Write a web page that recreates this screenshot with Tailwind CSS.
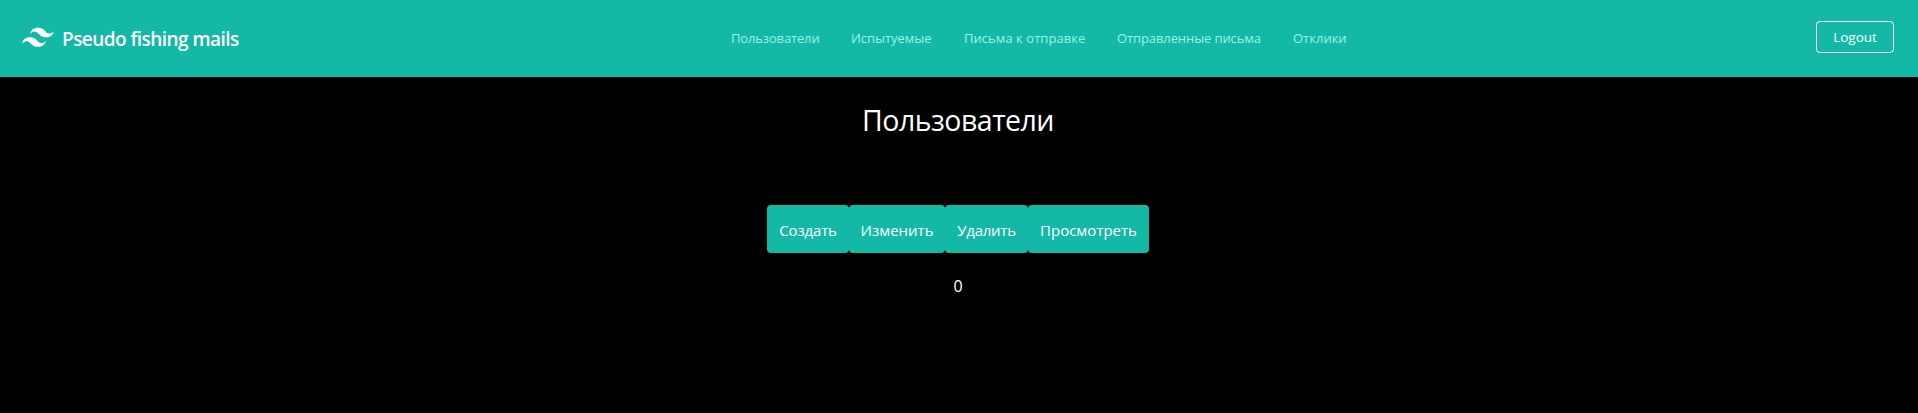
<!DOCTYPE html>
<html lang="ru"><head><meta charset="utf-8"><title>Pseudo fishing mails</title>
<script src="https://cdn.jsdelivr.net/npm/@tailwindcss/browser@4"></script></head>
<body class="bg-black text-white font-['Segoe_UI','Open_Sans',sans-serif] min-h-screen overflow-hidden">
<nav class="flex items-start bg-[#14b8a6] h-[77px] pl-[22px] pr-6 pt-[21px] whitespace-nowrap">
<div class="flex items-start w-[709px]">
<svg class="fill-current w-8 h-8 mr-2" viewBox="0 0 54 54"><path d="M13.5 22.1c1.8-7.2 6.3-10.8 13.5-10.8 10.8 0 12.15 8.1 17.55 9.45 3.6.9 6.75-.45 9.45-4.05-1.8 7.2-6.3 10.8-13.5 10.8-10.8 0-12.15-8.1-17.55-9.45-3.6-.9-6.75.45-9.45 4.05zM0 38.3c1.8-7.2 6.3-10.8 13.5-10.8 10.8 0 12.15 8.1 17.55 9.45 3.6.9 6.75-.45 9.45-4.05-1.8 7.2-6.3 10.8-13.5 10.8-10.8 0-12.15-8.1-17.55-9.45-3.6-.9-6.75.45-9.45 4.05z"/></svg>
<span class="font-semibold text-[19px] leading-7 tracking-[-0.55px] pt-1">Pseudo fishing mails</span></div>
<div class="flex gap-8 pt-[7px] text-[13px] leading-5 text-[#99f6e4] grow">
<a class="w-[88px] tracking-[-0.15px]">Пользователи</a>
<a class="w-[81px] tracking-[-0.05px]">Испытуемые</a>
<a class="w-[121px] tracking-[0.05px]">Письма к отправке</a>
<a class="w-[144px] tracking-[-0.1px]">Отправленные письма</a>
<a class="w-[54px]">Отклики</a></div>
<a class="flex items-center justify-center w-[78px] h-8 pt-px text-[13.5px] leading-none border border-white rounded">Logout</a>
</nav>
<main class="flex flex-col items-center pr-[2px]">
<h1 class="text-[28.5px] leading-9 tracking-[-0.5px] mt-[25px]">Пользователи</h1>
<div class="flex mt-[67px] h-12 text-[15px]">
<button class="w-[82px] pt-[2px] bg-[#14b8a6] rounded tracking-[-0.15px]">Создать</button>
<button class="w-24 pt-[2px] bg-[#14b8a6] rounded">Изменить</button>
<button class="w-[83px] pt-[2px] bg-[#14b8a6] rounded tracking-[-0.25px]">Удалить</button>
<button class="w-[121px] pt-[2px] bg-[#14b8a6] rounded">Просмотреть</button></div>
<p class="mt-[21px]">0</p></main></body></html>
